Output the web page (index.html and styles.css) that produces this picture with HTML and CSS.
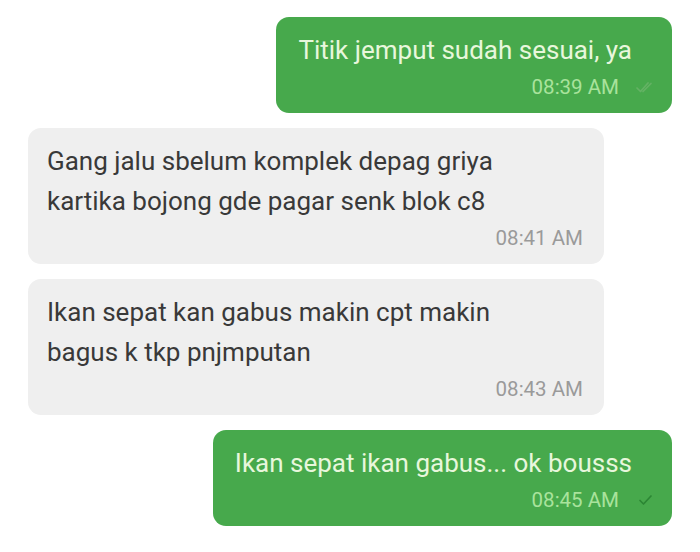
FILE: index.html
```html
<!DOCTYPE html>
<html lang="id">
<head>
  <meta charset="UTF-8">
  <meta name="viewport" content="width=device-width, initial-scale=1.0">
  <title>Chat</title>
  <link rel="stylesheet" href="styles.css">
</head>
<body>
  <div class="chat">
    <div class="bubble out">
      <p class="text">Titik jemput sudah sesuai, ya</p>
      <div class="meta">
        <span class="time">08:39 AM</span>
        <svg class="tick read" width="20" height="14" viewBox="0 0 20 14">
          <path d="M1 8 L4.5 11.5 L12 3" />
          <path d="M7 11.5 L15 3.5" />
        </svg>
      </div>
    </div>

    <div class="bubble in">
      <p class="text">Gang jalu sbelum komplek depag griya<br>kartika bojong gde pagar senk blok c8</p>
      <div class="meta">
        <span class="time">08:41 AM</span>
      </div>
    </div>

    <div class="bubble in">
      <p class="text">Ikan sepat kan gabus makin cpt makin<br>bagus k tkp pnjmputan</p>
      <div class="meta">
        <span class="time">08:43 AM</span>
      </div>
    </div>

    <div class="bubble out">
      <p class="text">Ikan sepat ikan gabus... ok bousss</p>
      <div class="meta">
        <span class="time">08:45 AM</span>
        <svg class="tick" width="20" height="14" viewBox="0 0 20 14">
          <path d="M4 7.5 L7.5 11 L15 3" />
        </svg>
      </div>
    </div>
  </div>
</body>
</html>
```

FILE: styles.css
```css
/* Base */
* {
  margin: 0;
  padding: 0;
  box-sizing: border-box;
}
body {
  font-family: Roboto, 'Noto Sans', sans-serif;
  background: #fff;
}
.chat {
  display: flex;
  flex-direction: column;
  gap: 15px;
  padding: 17px 28px;
}
/* Bubbles */
.bubble {
  padding: 13px 16px 13px 22px;
  border-radius: 13px;
}
.bubble .text {
  font-size: 26px;
  line-height: 40px;
}
.bubble .meta {
  display: flex;
  justify-content: flex-end;
  align-items: center;
  margin-top: 4px;
  font-size: 20.5px;
  line-height: 26px;
}
.bubble.out {
  align-self: flex-end;
  background: #47a94c;
  color: #e8f7dc;
}
.bubble.out .text {
  padding-right: 24px;
}
.bubble.out .time {
  color: #a9e39c;
}
.bubble.in {
  align-self: flex-start;
  width: 576px;
  padding-left: 19px;
  padding-right: 21px;
  background: #efefef;
  color: #393939;
}
.bubble.in .time {
  color: #9a9a9a;
}
/* Tick */
.tick {
  margin-left: 17px;
  fill: none;
  stroke: #2c8634;
  stroke-width: 1.7;
  stroke-linecap: round;
  stroke-linejoin: round;
}
.tick.read {
  stroke: #64b264;
}
```
